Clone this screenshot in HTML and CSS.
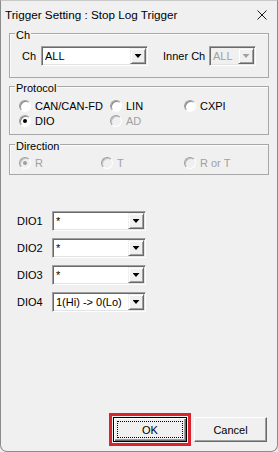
FILE: index.html
```html
<!DOCTYPE html>
<html>
<head>
<meta charset="utf-8">
<link rel="stylesheet" href="styles.css">
</head>
<body>
<div class="window">
  <div class="titlebar">
    <span class="title">Trigger Setting : Stop Log Trigger</span>
    <svg class="close" width="10" height="10" viewBox="0 0 10 10"><path d="M0.5 0.5L9.5 9.5M9.5 0.5L0.5 9.5" stroke="#1a1a1a" stroke-width="1" fill="none"/></svg>
  </div>

  <div class="group group-ch">
    <span class="group-title">Ch</span>
    <div class="ch-row">
      <span class="lbl lbl-ch">Ch</span>
      <div class="combo combo-ch"><span class="combo-text">ALL</span><span class="combo-btn"><span class="arrow"></span></span></div>
      <span class="lbl lbl-inner">Inner Ch</span>
      <div class="combo combo-inner disabled"><span class="combo-text">ALL</span><span class="combo-btn"><span class="arrow"></span></span></div>
    </div>
  </div>

  <div class="group group-protocol">
    <span class="group-title">Protocol</span>
    <div class="radio-grid protocol-grid">
      <label class="radio"><span class="rb"></span>CAN/CAN-FD</label>
      <label class="radio"><span class="rb"></span>LIN</label>
      <label class="radio"><span class="rb"></span>CXPI</label>
      <label class="radio"><span class="rb checked"></span>DIO</label>
      <label class="radio disabled"><span class="rb"></span>AD</label>
    </div>
  </div>

  <div class="group group-direction">
    <span class="group-title">Direction</span>
    <div class="radio-grid direction-grid">
      <label class="radio disabled"><span class="rb checked"></span>R</label>
      <label class="radio disabled"><span class="rb"></span>T</label>
      <label class="radio disabled"><span class="rb"></span>R or T</label>
    </div>
  </div>

  <div class="dio-list">
    <div class="dio-row"><span class="dio-lbl">DIO1</span><div class="combo combo-dio"><span class="combo-text">*</span><span class="combo-btn"><span class="arrow"></span></span></div></div>
    <div class="dio-row"><span class="dio-lbl">DIO2</span><div class="combo combo-dio"><span class="combo-text">*</span><span class="combo-btn"><span class="arrow"></span></span></div></div>
    <div class="dio-row"><span class="dio-lbl">DIO3</span><div class="combo combo-dio"><span class="combo-text">*</span><span class="combo-btn"><span class="arrow"></span></span></div></div>
    <div class="dio-row"><span class="dio-lbl">DIO4</span><div class="combo combo-dio"><span class="combo-text">1(Hi) -&gt; 0(Lo)</span><span class="combo-btn"><span class="arrow"></span></span></div></div>
  </div>

  <div class="buttons">
    <div class="highlight"><button class="btn btn-default"><span class="focus">OK</span></button></div>
    <button class="btn btn-cancel">Cancel</button>
  </div>
</div>
</body>
</html>
```

FILE: styles.css
```css
html, body {
  margin: 0;
  padding: 0;
  background: #f0f0f0;
}

body {
  font-family: "Liberation Sans", Arial, sans-serif;
  font-size: 11px;
  color: #000;
}

.window {
  box-sizing: border-box;
  width: 278px;
  height: 452px;
  background: #f0f0f0;
  border: 1px solid #8c8c8c;
  border-top-color: #c8c8c8;
  border-radius: 0 0 7px 7px;
  display: flex;
  flex-direction: column;
}

.titlebar {
  height: 27px;
  display: flex;
  align-items: center;
  justify-content: space-between;
  padding: 0 10px 0 4px;
}

.title {
  font-size: 11.7px;
  color: #000;
}

.close {
  display: block;
}

.group {
  margin: 0 8px;
  border: 1px solid #a8a8a8;
  box-shadow: inset 1px 1px 0 #fbfbfb;
}

.group-title {
  display: block;
  width: max-content;
  margin: -5px 0 0 5px;
  padding: 0 1px;
  line-height: 13px;
  background: #f0f0f0;
}

.group-ch {
  margin-top: 5px;
  padding-bottom: 11px;
}

.ch-row {
  display: flex;
  align-items: center;
  margin-top: 4px;
  padding-left: 12px;
}

.lbl-ch {
  width: 19px;
}

.combo-ch {
  width: 107px;
}

.lbl-inner {
  margin-left: 15px;
  width: 46px;
}

.combo-inner {
  width: 47px;
}

.combo {
  box-sizing: border-box;
  height: 20px;
  display: flex;
  align-items: center;
  background: #fff;
  border: 1px solid;
  border-color: #a0a0a0 #ffffff #ffffff #a0a0a0;
  box-shadow: inset 1px 1px 0 #696969, inset -1px -1px 0 #e3e3e3;
  padding: 1px;
}

.combo-text {
  flex: 1;
  padding-left: 2px;
  line-height: 16px;
  white-space: nowrap;
  overflow: hidden;
}

.combo-btn {
  box-sizing: border-box;
  width: 16px;
  height: 16px;
  background: #f0f0f0;
  border: 1px solid;
  border-color: #f0f0f0 #696969 #696969 #f0f0f0;
  box-shadow: inset 1px 1px 0 #ffffff, inset -1px -1px 0 #a0a0a0;
  display: flex;
  align-items: center;
  justify-content: center;
}

.arrow {
  width: 7px;
  height: 4px;
  background: #000;
  clip-path: polygon(0 0, 100% 0, 50% 100%);
}

.combo.disabled {
  background: #f0f0f0;
  color: #a0a0a0;
}

.combo.disabled .arrow {
  background: #a0a0a0;
}

.group-protocol {
  margin-top: 8px;
  padding-bottom: 6px;
}

.group-direction {
  margin-top: 9px;
  padding-bottom: 4px;
}

.radio-grid {
  display: grid;
  grid-auto-rows: 15px;
  padding-left: 9px;
}

.protocol-grid {
  margin-top: 3px;
  grid-template-columns: 91px 74px 1fr;
}

.direction-grid {
  margin-top: 2px;
  grid-template-columns: 82px 83px 1fr;
}

.radio {
  display: flex;
  align-items: center;
  white-space: nowrap;
}

.rb {
  box-sizing: border-box;
  width: 12px;
  height: 12px;
  border-radius: 50%;
  border: 1px solid;
  border-color: #a0a0a0 #ffffff #ffffff #a0a0a0;
  background: #fff;
  box-shadow: inset 1px 1px 0 #8a8a8a;
  margin-right: 4px;
  display: flex;
  align-items: center;
  justify-content: center;
}

.rb.checked::after {
  content: "";
  width: 4px;
  height: 4px;
  border-radius: 50%;
  background: #000;
}

.radio.disabled {
  color: #a0a0a0;
}

.radio.disabled .rb {
  background: #f0f0f0;
  box-shadow: inset 1px 1px 0 #c0c0c0;
}

.radio.disabled .rb.checked::after {
  background: #a0a0a0;
}

.dio-list {
  display: flex;
  flex-direction: column;
  gap: 7px;
  margin-top: 36px;
  padding-left: 16px;
}

.dio-row {
  display: flex;
  align-items: center;
}

.dio-lbl {
  width: 35px;
}

.combo-dio {
  width: 94px;
}

.buttons {
  margin-top: auto;
  display: flex;
  justify-content: flex-end;
  align-items: center;
  gap: 3px;
  padding: 0 10px 5px 0;
}

.highlight {
  border: 3px solid #d9232e;
  padding: 1px;
  display: flex;
}

.btn {
  box-sizing: border-box;
  height: 25px;
  margin: 0;
  padding: 0;
  font-family: "Liberation Sans", Arial, sans-serif;
  font-size: 11px;
  color: #000;
  background: #f0f0f0;
  display: flex;
  align-items: center;
  justify-content: center;
}

.btn-default {
  width: 74px;
  border: 1px solid #000;
  box-shadow: inset 1px 1px 0 #ffffff, inset -1px -1px 0 #696969, inset -2px -2px 0 #a0a0a0;
  padding: 3px;
}

.focus {
  box-sizing: border-box;
  flex: 1;
  align-self: stretch;
  display: flex;
  align-items: center;
  justify-content: center;
  border: 1px dotted #000;
}

.btn-cancel {
  width: 73px;
  border: 1px solid;
  border-color: #ffffff #696969 #696969 #ffffff;
  box-shadow: inset -1px -1px 0 #a0a0a0;
}
```
